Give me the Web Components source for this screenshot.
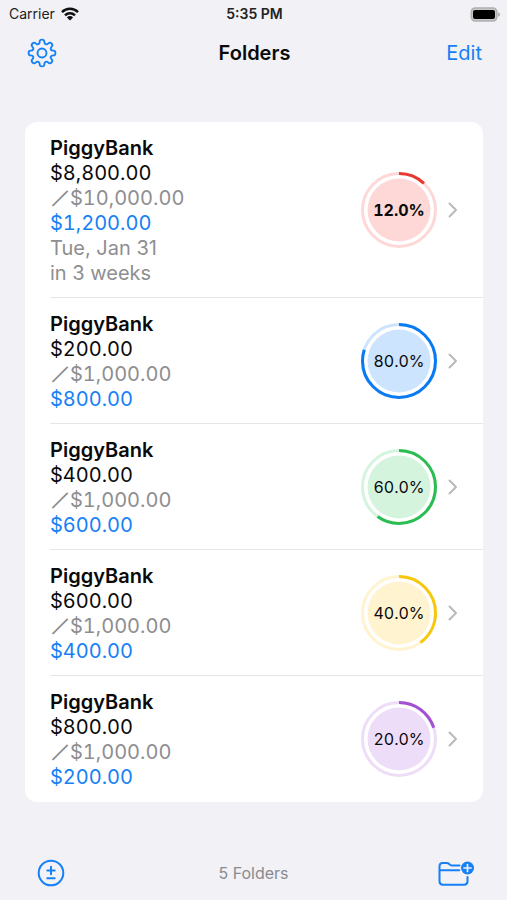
<!DOCTYPE html>
<html lang="en">
<head>
<meta charset="utf-8">
<meta name="viewport" content="width=device-width, initial-scale=1">
<title>Folders</title>
<style>
  body { margin: 0; background: #f1f1f6; color: #0a0a0a; font-family: Inter, "Noto Sans CJK JP", sans-serif; font-size: 20px; line-height: 25px; }
</style>
</head>
<body>
<folders-screen>
  <status-bar slot="status"></status-bar>
  <nav-bar slot="nav">Folders</nav-bar>
  <folder-list>
    <folder-row saved="$8,800.00" goal="$10,000.00" left="$1,200.00" percent="12.0" color="#e8382f" tint="#fdd8d6" strong>
      <span>Tue, Jan 31</span><span>in 3 weeks</span>
    </folder-row>
    <folder-row saved="$200.00" goal="$1,000.00" left="$800.00" percent="80.0" color="#087bf3" tint="#cce4fe"></folder-row>
    <folder-row saved="$400.00" goal="$1,000.00" left="$600.00" percent="60.0" color="#2bbd52" tint="#d5f4de"></folder-row>
    <folder-row saved="$600.00" goal="$1,000.00" left="$400.00" percent="40.0" color="#f6c70c" tint="#fff4cf"></folder-row>
    <folder-row saved="$800.00" goal="$1,000.00" left="$200.00" percent="20.0" color="#a450d3" tint="#eeddf8"></folder-row>
  </folder-list>
  <tool-bar slot="tools">5 Folders</tool-bar>
</folders-screen>

<script>
const define = (name, html, setup) => customElements.define(name, class extends HTMLElement {
  connectedCallback() {
    if (this.shadowRoot) return;
    this.attachShadow({ mode: "open" }).innerHTML = html;
    if (setup) setup(this, this.shadowRoot);
  }
});

define("folders-screen", `
  <style>
    :host { display: flex; flex-direction: column; min-height: 100vh; }
    main { flex: 1; padding: 44px 24px 24px 25px; }
  </style>
  <slot name="status"></slot><slot name="nav"></slot>
  <main><slot></slot></main>
  <slot name="tools"></slot>`);

define("status-bar", `
  <style>
    :host { display: grid; grid-template-columns: 1fr auto 1fr; align-items: center; height: 28px; padding: 0 7px 0 9px; font-size: 14px; line-height: 20px; color: #222; }
    .carrier { display: flex; align-items: center; gap: 6px; }
    time { font-weight: 600; }
    .battery { justify-self: end; }
    svg { display: block; }
  </style>
  <span class="carrier">Carrier
    <svg width="18" height="14" viewBox="0 0 18 14" aria-hidden="true"><g fill="none" stroke="#111" stroke-width="2.5"><path d="M1 5.1a11.4 11.4 0 0 1 16 0"/><path d="M4 8.3a7.2 7.2 0 0 1 10 0"/></g><path d="M9 13.6 5.9 10.4a4.4 4.4 0 0 1 6.2 0z" fill="#111"/></svg>
  </span>
  <time>5:35 PM</time>
  <svg class="battery" width="30" height="15" viewBox="0 0 30 15" aria-label="Battery full" role="img"><rect x="1.3" y="1" width="25.5" height="13" rx="4" fill="#c9c9cb" stroke="#b0b0b2" stroke-width="1.6"/><rect x="3" y="3" width="22" height="9" rx="2" fill="#000"/><path d="M28.2 5.2q1.8.6 1.8 2.3t-1.8 2.3z" fill="#aaa"/></svg>`);

define("nav-bar", `
  <style>
    :host { display: grid; grid-template-columns: 1fr auto 1fr; align-items: center; height: 50px; padding: 0 25px 0 27px; }
    h1 { margin: 0; font-size: 20px; line-height: 25px; font-weight: 600; }
    button { padding: 0; border: 0; background: none; font: inherit; color: #1680f5; justify-self: start; cursor: pointer; }
    .edit { justify-self: end; }
    svg { display: block; }
  </style>
  <button aria-label="Settings"><svg width="30" height="30" viewBox="-15 -15 30 30" fill="none" stroke="currentColor" stroke-width="1.9" stroke-linejoin="round"><path class="gear"/><circle r="4.5"/></svg></button>
  <h1><slot></slot></h1>
  <button class="edit">Edit</button>`, (host, root) => {
    const pts = [];
    for (let i = 0; i < 8; i++)
      for (const [da, r] of [[-14, 9.6], [-10, 13.6], [10, 13.6], [14, 9.6]]) {
        const a = (i * 45 + da) * Math.PI / 180;
        pts.push([r * Math.sin(a), -r * Math.cos(a)]);
      }
    const mid = (p, q) => [(p[0] + q[0]) / 2, (p[1] + q[1]) / 2];
    let d = "M" + mid(pts[pts.length - 1], pts[0]);
    pts.forEach((p, i) => { d += "Q" + p + " " + mid(p, pts[(i + 1) % pts.length]); });
    root.querySelector(".gear").setAttribute("d", d + "Z");
  });

define("folder-list", `
  <style>
    :host { display: block; background: #fff; border-radius: 12px; overflow: hidden; }
    ::slotted(:not(:last-child)) { --line: #e6e6e9; }
  </style>
  <slot></slot>`);

define("progress-ring", `
  <style>
    :host { display: grid; place-items: center; width: 76px; height: 76px; font-size: 16px; line-height: 20px; font-variant-numeric: tabular-nums; }
    svg, span { grid-area: 1 / 1; }
    svg { display: block; }
  </style>
  <svg width="76" height="76" viewBox="0 0 76 76" fill="none" aria-hidden="true">
    <circle class="tint" cx="38" cy="38" r="31.5"/>
    <circle class="track" cx="38" cy="38" r="36.5" stroke-width="3"/>
    <circle class="arc" cx="38" cy="38" r="36.5" stroke-width="3" pathLength="100" stroke-linecap="butt" transform="rotate(-90 38 38)"/>
  </svg>
  <span></span>`, (host, root) => {
    const v = host.getAttribute("value");
    root.querySelector("span").textContent = v + "%";
    root.querySelector(".tint").setAttribute("fill", host.getAttribute("tint"));
    root.querySelector(".track").setAttribute("stroke", host.getAttribute("tint"));
    const arc = root.querySelector(".arc");
    arc.setAttribute("stroke", host.getAttribute("color"));
    arc.setAttribute("stroke-dasharray", parseFloat(v) + " 100");
  });

define("folder-row", `
  <style>
    :host { display: block; }
    a { display: flex; align-items: center; gap: 11px; margin-left: 25px; padding-right: 25px; border-bottom: 1px solid var(--line, transparent); color: inherit; text-decoration: none; }
    .text { flex: 1; display: flex; flex-direction: column; padding: 14px 0 11px; }
    strong { font-weight: 600; }
    .saved, .goal, .left { font-variant-numeric: tabular-nums; }
    .goal, ::slotted(span) { color: #8e8e90; }
    .goal { display: flex; }
    .slash { width: 20px; text-align: center; font-size: 16px; -webkit-text-stroke: 1px #8e8e90; }
    .left { color: #1680f5; }
    :host([strong]) progress-ring { font-weight: 700; }
    svg { display: block; }
  </style>
  <a href="#folder">
    <span class="text"><strong>PiggyBank</strong><span class="saved"></span><span class="goal"><span class="slash">\uFF0F</span><span class="total"></span></span><span class="left"></span><slot></slot></span>
    <svg width="10" height="16" viewBox="0 0 10 16" fill="none" stroke="#b9b9bb" stroke-width="2" stroke-linecap="round" stroke-linejoin="round" aria-hidden="true"><path d="M1.5 1.5 8 8l-6.5 6.5"/></svg>
  </a>`, (host, root) => {
    for (const k of ["saved", "left"]) root.querySelector("." + k).textContent = host.getAttribute(k);
    root.querySelector(".total").textContent = host.getAttribute("goal");
    const ring = document.createElement("progress-ring");
    ring.setAttribute("value", host.getAttribute("percent"));
    ring.setAttribute("color", host.getAttribute("color"));
    ring.setAttribute("tint", host.getAttribute("tint"));
    root.querySelector("svg").before(ring);
  });

define("tool-bar", `
  <style>
    :host { display: grid; grid-template-columns: 1fr auto 1fr; align-items: center; height: 54px; padding: 0 32px; font-size: 16px; line-height: 20px; color: #8a8a8e; }
    button { padding: 0; border: 0; background: none; color: #1680f5; justify-self: start; cursor: pointer; }
    .adjust { padding-left: 4px; }
    .add { justify-self: end; }
    svg { display: block; }
  </style>
  <button class="adjust" aria-label="Add or subtract"><svg width="30" height="30" viewBox="0 0 30 30" fill="none" stroke="currentColor" stroke-width="2" stroke-linecap="round"><circle cx="15" cy="15" r="12.3"/><path d="M15 8.8v7.4M11.3 12.5h7.4M11.3 20.3h7.4"/></svg></button>
  <slot></slot>
  <button class="add" aria-label="New folder"><svg width="38" height="30" viewBox="0 0 38 30" fill="none" stroke="currentColor" stroke-width="2" stroke-linecap="round" stroke-linejoin="round"><path d="M22.5 7.5h-7.3c-1.2 0-1.8-.4-2.6-1.1l-.7-.6c-.6-.6-1.2-.8-2.2-.8H5.8C3.6 5 2.5 6.2 2.5 8.3V23.3c0 2.2 1.2 3.4 3.4 3.4h21.2c2.2 0 3.4-1.2 3.4-3.4V19M3 12.3h19.3"/><circle cx="30.5" cy="10" r="6.5" fill="currentColor" stroke="none"/><path d="M30.5 6.5v7M27 10h7" stroke="#f1f1f6" stroke-width="1.7"/></svg></button>`);
</script>
</body>
</html>
